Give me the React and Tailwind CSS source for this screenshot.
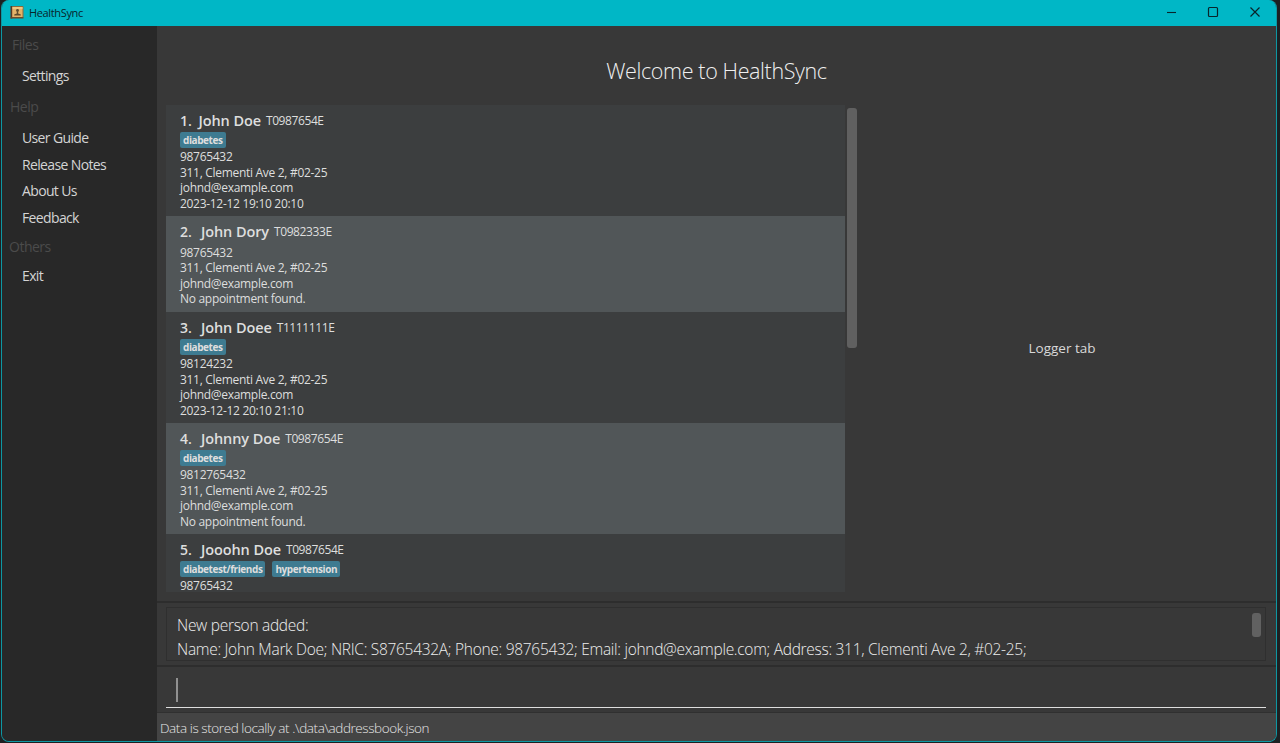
import React from "react";

const people = [
  { name: "John Doe", nric: "T0987654E", tags: ["diabetes"], details: ["98765432", "311, Clementi Ave 2, #02-25", "johnd@example.com", "2023-12-12 19:10 20:10"], height: "h-[111px]" },
  { name: "John Dory", nric: "T0982333E", tags: [], details: ["98765432", "311, Clementi Ave 2, #02-25", "johnd@example.com", "No appointment found."], height: "h-[96px]" },
  { name: "John Doee", nric: "T1111111E", tags: ["diabetes"], details: ["98124232", "311, Clementi Ave 2, #02-25", "johnd@example.com", "2023-12-12 20:10 21:10"], height: "h-[111px]" },
  { name: "Johnny Doe", nric: "T0987654E", tags: ["diabetes"], details: ["9812765432", "311, Clementi Ave 2, #02-25", "johnd@example.com", "No appointment found."], height: "h-[111px]" },
  { name: "Jooohn Doe", nric: "T0987654E", tags: ["diabetest/friends", "hypertension"], details: ["98765432"], height: "h-[58px]" },
];

function AppIcon() {
  return (
    <svg className="h-[14px] w-[14px]" viewBox="0 0 14 14">
      <rect x="2" y="0" width="11.500" height="12" rx="1" fill="#8a6a3c" />
      <rect x="2" y="1" width="10.500" height="10" fill="#e3b268" />
      <rect x="2" y="1" width="10.500" height="2" fill="#f0c780" />
      <rect x="0.500" y="0" width="1.700" height="12.500" fill="#5b3a24" />
      <rect x="0.500" y="11.200" width="13" height="1.300" fill="#6b4526" />
      <circle cx="7.500" cy="4.500" r="1.400" fill="#5d4a2c" />
      <path d="M6.800 5.500h1.400v2.100l2.600.8v1.100H4.200V8.400l2.600-.8z" fill="#5d4a2c" />
    </svg>
  );
}

function TitleBar() {
  return (
    <header className="flex h-[26px] shrink-0 items-center bg-[#00b7c6] pl-[8px] text-[#08252b]">
      <AppIcon />
      <span className="ml-[5px] text-[11px] tracking-[-0.35px]">HealthSync</span>
      <div className="ml-auto flex items-center">
        <svg className="h-[26px] w-[42px]" viewBox="0 0 42 26" fill="none" stroke="currentColor">
          <path d="M17 12.500h9" strokeWidth="1.1" />
        </svg>
        <svg className="h-[26px] w-[42px]" viewBox="0 0 42 26" fill="none" stroke="currentColor">
          <rect x="16.500" y="7.500" width="9" height="9" rx="1" strokeWidth="1.2" />
        </svg>
        <svg className="h-[26px] w-[42px]" viewBox="0 0 42 26" fill="none" stroke="currentColor">
          <path d="M16.500 7.500l9 9m0-9l-9 9" strokeWidth="1.2" />
        </svg>
      </div>
    </header>
  );
}

function MenuHeading({ children, className }) {
  return <div className={`text-[14px] leading-[20px] tracking-[-0.5px] text-[#4b4b4b] ${className}`}>{children}</div>;
}

function MenuItem({ children }) {
  return <div className="h-[26.6px] pl-[20px] text-[14px] leading-[26.6px] tracking-[-0.64px] text-[#d4d4d4]">{children}</div>;
}

function Sidebar() {
  return (
    <nav className="flex w-[155px] shrink-0 flex-col bg-[#282828] pt-[9px]">
      <MenuHeading className="pl-[10px]">Files</MenuHeading>
      <div className="mt-[8px]"><MenuItem>Settings</MenuItem></div>
      <MenuHeading className="mt-[7.5px] pl-[8px]">Help</MenuHeading>
      <div className="mt-[8px]">
        <MenuItem>User Guide</MenuItem>
        <MenuItem>Release Notes</MenuItem>
        <MenuItem>About Us</MenuItem>
        <MenuItem>Feedback</MenuItem>
      </div>
      <MenuHeading className="mt-[6px] pl-[7px]">Others</MenuHeading>
      <div className="mt-[6px]"><MenuItem>Exit</MenuItem></div>
    </nav>
  );
}

function PersonCard({ person, index }) {
  const background = index % 2 === 0 ? "bg-[#3c3e3f]" : "bg-[#515658]";
  return (
    <li className={`shrink-0 pl-[14px] pt-[5px] text-[#dedede] ${background} ${person.height}`}>
      <div className="flex h-[22px] items-center leading-[22px]">
        <span className={`text-[14px] font-semibold ${index === 0 ? "w-[18.5px]" : "w-[21px]"}`}>{index + 1}.</span>
        <span className="text-[14.5px] font-semibold tracking-[-0.1px]">{person.name}</span>
        <span className="ml-[5px] text-[12px] tracking-[-0.4px]">{person.nric}</span>
      </div>
      {person.tags.length > 0 ? (
        <div className="flex h-[17px] gap-[7px]">
          {person.tags.map((tag) => (
            <span key={tag} className="h-[16px] rounded-[2px] bg-[#3e7b91] px-[3px] text-[10px] font-bold leading-[16px] tracking-[-0.42px]">
              {tag}
            </span>
          ))}
        </div>
      ) : (
        <div className="h-[1.500px]" />
      )}
      <div className="text-[12px] leading-[15.6px] tracking-[-0.3px]">
        {person.details.map((line) => (
          <p key={line}>{line}</p>
        ))}
      </div>
    </li>
  );
}

export default function App() {
  return (
    <div className="h-[743px] w-[1280px] overflow-hidden bg-[#1d2022] pl-px pr-[3px] font-['Open_Sans','Noto_Sans',sans-serif]">
      <div className="flex h-[742px] flex-col overflow-hidden rounded-[8px] border-x border-b border-[#0d97a3] bg-[#383838]">
        <TitleBar />
        <div className="flex min-h-0 flex-1">
          <Sidebar />
          <main className="flex min-w-0 flex-1 flex-col">
            <h1 className="h-[79px] shrink-0 pt-[30px] text-center text-[21.5px] font-light leading-[30px] tracking-[-0.38px] text-[#f0f0f0]">Welcome to HealthSync</h1>
            <section className="flex h-[487px] shrink-0 pl-[9px]">
              <ul className="flex h-full w-[679px] shrink-0 flex-col overflow-hidden">
                {people.map((person, index) => (
                  <PersonCard key={index} person={person} index={index} />
                ))}
              </ul>
              <div className="ml-[2px] mt-[3px] h-[240px] w-[10px] rounded-[3px] bg-[#606060]" />
              <div className="flex flex-1 items-center justify-center pr-[9px] text-[13.5px] font-medium text-[#d8d8d8]">Logger tab</div>
            </section>
            <section className="mt-[9px] h-[64px] shrink-0 border-t-2 border-[#2d2d2d] pl-[9px] pr-[10px] pt-[4px]">
              <div className="flex h-[54px] justify-between border border-[#2f2f2f] pl-[10px] pr-[4px] pt-[5px] font-light text-[#eeeeee]">
                <div className="text-[15.5px] leading-[24px] tracking-[-0.29px]">
                  <p>New person added:</p>
                  <p>Name: John Mark Doe; NRIC: S8765432A; Phone: 98765432; Email: johnd@example.com; Address: 311, Clementi Ave 2, #02-25;</p>
                </div>
                <div className="h-[24px] w-[9px] rounded-[3px] bg-[#616161]" />
              </div>
            </section>
            <section className="h-[47px] shrink-0 border-t-2 border-[#2d2d2d] pl-[9px] pr-[10px]">
              <div className="h-[41px] border-b border-[#dedede] pl-[10px] pt-[11px]">
                <div className="h-[24px] w-[2px] bg-[#909090]" />
              </div>
            </section>
            <footer className="min-h-0 flex-1 border-t border-[#303030] bg-[#444444] pl-[3px] pt-px text-[13.5px] font-light leading-[28px] tracking-[-0.42px] text-[#e6e6e6]">
              Data is stored locally at .\data\addressbook.json
            </footer>
          </main>
        </div>
      </div>
    </div>
  );
}
